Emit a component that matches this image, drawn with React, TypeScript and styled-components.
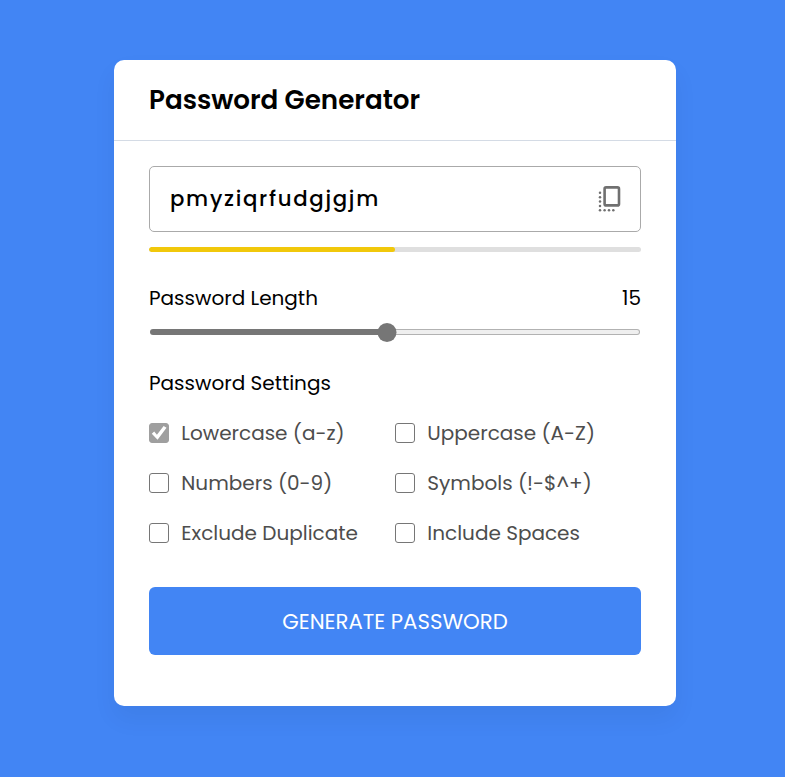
import React, { useState } from "react";
import styled, { createGlobalStyle } from "styled-components";

const GlobalStyle = createGlobalStyle`
  *, *::before, *::after { box-sizing: border-box; }
  body {
    margin: 0;
    min-height: 777px;
    background: #4285f4;
    font-family: Poppins, Inter, "Open Sans", sans-serif;
    color: #000;
  }
`;

const Page = styled.main`
  display: flex;
  justify-content: center;
  padding: 60px 0 0 5px;
`;

const Card = styled.section`
  width: 562px;
  height: 646px;
  flex: none;
  background: #fff;
  border-radius: 10px;
  box-shadow: 0 12.5px 25px rgba(0, 0, 0, 0.05);
`;

const Title = styled.h2`
  margin: 0;
  height: 81px;
  padding: 0 35px;
  border-bottom: 1px solid #d4dbe5;
  font-size: 26.2px;
  font-weight: 600;
  line-height: 80px;
  white-space: nowrap;
`;

const Body = styled.div`
  padding: 25px 35px 0;
`;

const PasswordBox = styled.div`
  height: 66px;
  display: flex;
  align-items: center;
  justify-content: space-between;
  padding: 0 17px 0 20px;
  border: 1px solid #aaa;
  border-radius: 5px;
`;

const CopyIcon = styled.svg`
  display: block;
  flex: none;
  fill: #707070;
`;

const Strength = styled.div`
  height: 5px;
  margin-top: 15px;
  border-radius: 3px;
  background: #dfdfdf;
  overflow: hidden;
`;

const StrengthFill = styled.div`
  width: 50%;
  height: 100%;
  border-radius: 3px;
  background: #f1c80b;
`;

const LengthRow = styled.div`
  display: flex;
  justify-content: space-between;
  margin-top: 31px;
  height: 30px;
`;

const Text = styled.span<{ $spacing?: number; $size?: number; $weight?: number }>`
  font-size: ${(p) => p.$size ?? 20}px;
  font-weight: ${(p) => p.$weight ?? 400};
  letter-spacing: ${(p) => p.$spacing ?? 0}px;
  line-height: 30px;
  white-space: nowrap;
`;

const Range = styled.input<{ $percent: number }>`
  appearance: none;
  display: block;
  width: 100%;
  height: 20px;
  margin: 9px 0 0;
  padding: 0 1px;
  background: transparent;

  &::-webkit-slider-runnable-track {
    box-sizing: border-box;
    height: 6px;
    border: 1px solid transparent;
    border-radius: 3px;
    background:
      linear-gradient(#767676, #767676) 0 0 / ${(p) => p.$percent}% 100% no-repeat border-box,
      linear-gradient(#efefef, #efefef) padding-box,
      linear-gradient(#b2b2b2, #b2b2b2) border-box;
  }

  &::-webkit-slider-thumb {
    appearance: none;
    box-sizing: border-box;
    width: 19px;
    height: 19px;
    margin-top: -7.5px;
    transform: translateX(0.5px);
    border-radius: 50%;
    background: #767676;
  }
`;

const SettingsTitle = styled.div`
  margin-top: 26px;
  height: 30px;
  display: flex;
`;

const Options = styled.div`
  display: grid;
  grid-template-columns: 1fr 1fr;
  grid-auto-rows: 30px;
  row-gap: 20px;
  margin-top: 20px;
`;

const Option = styled.label`
  display: flex;
  align-items: center;
  gap: 12.3px;
  color: #4d4d4d;
`;

const Check = styled.input`
  appearance: none;
  flex: none;
  display: grid;
  place-items: center;
  width: 20px;
  height: 20px;
  margin: 0;
  border: 1px solid #767676;
  border-radius: 3px;
  background: #fff;

  &:checked {
    border-color: #9f9f9f;
    background: #9f9f9f;
  }

  &:checked::before {
    content: "";
    width: 16px;
    height: 14px;
    background: #fff;
    clip-path: polygon(5% 56%, 20% 40%, 37% 62%, 79% 0, 97% 13%, 41% 98%);
  }
`;

const Generate = styled.button`
  width: 100%;
  height: 68px;
  margin-top: 39px;
  padding: 2px 0 0;
  border: 0;
  border-radius: 6px;
  background: #4285f4;
  color: #fff;
  font-family: inherit;
`;

const settings = [
  { name: "Lowercase (a-z)", fixed: true },
  { name: "Uppercase (A-Z)" },
  { name: "Numbers (0-9)" },
  { name: "Symbols (!-$^+)" },
  { name: "Exclude Duplicate" },
  { name: "Include Spaces" },
];

const dots = [[2, 7.8], [2, 12.2], [2, 16.5], [2, 20.9], [2, 25.3], [6.6, 25.3], [11, 25.3], [15.3, 25.3]];

export default function App() {
  const [length, setLength] = useState(15);
  return (
    <>
      <GlobalStyle />
      <Page>
        <Card>
          <Title>Password Generator</Title>
          <Body>
            <PasswordBox>
              <Text $size={21.25} $weight={500} $spacing={1.7}>pmyziqrfudgjgjm</Text>
              <CopyIcon width="25" height="28" viewBox="0 0 25 28">
                <rect x="6.6" y="2.4" width="14.4" height="18" rx="1.5" fill="none" stroke="#707070" strokeWidth="2.6" />
                {dots.map(([x, y]) => (
                  <circle key={`${x}-${y}`} cx={x} cy={y} r="1.25" />
                ))}
              </CopyIcon>
            </PasswordBox>
            <Strength><StrengthFill /></Strength>
            <LengthRow>
              <Text>Password Length</Text>
              <Text>{length}</Text>
            </LengthRow>
            <Range
              type="range"
              min={1}
              max={30}
              value={length}
              $percent={((length - 1) / 29) * 100}
              onChange={(e) => setLength(Number(e.target.value))}
            />
            <SettingsTitle><Text>Password Settings</Text></SettingsTitle>
            <Options>
              {settings.map((s) => (
                <Option key={s.name}>
                  <Check type="checkbox" defaultChecked={s.fixed} disabled={s.fixed} />
                  <Text>{s.name}</Text>
                </Option>
              ))}
            </Options>
            <Generate><Text $size={21.25}>GENERATE PASSWORD</Text></Generate>
          </Body>
        </Card>
      </Page>
    </>
  );
}
